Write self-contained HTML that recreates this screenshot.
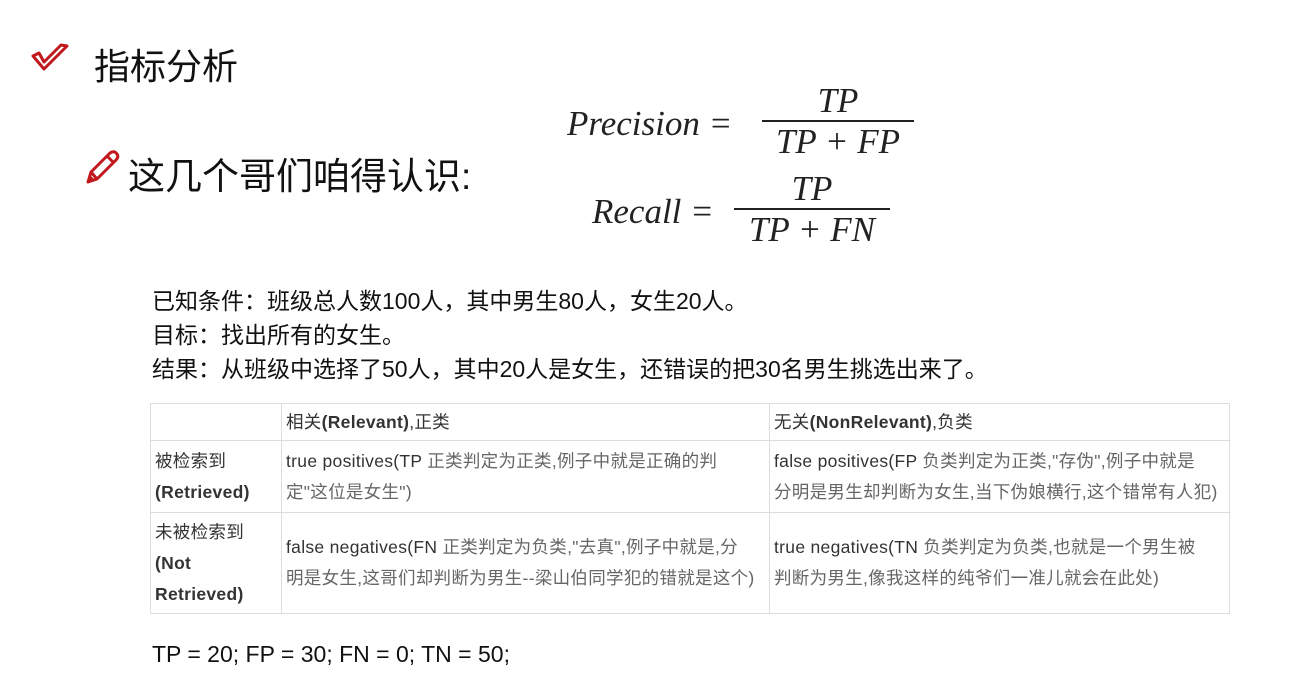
<!DOCTYPE html>
<html><head><meta charset="utf-8"><style>
body{margin:0;width:1297px;height:683px;background:#fff;position:relative;overflow:hidden;font-family:"Liberation Sans","Noto Sans CJK SC",sans-serif;color:#111}
.a{position:absolute;white-space:nowrap}
.m{font-family:"Liberation Serif",serif;font-style:italic;font-size:35px;color:#222}
.frac{position:absolute;text-align:center}
.frac .n{border-bottom:2px solid #222;padding:0 4px 0;line-height:38px}
.frac .d{line-height:40px}
table{position:absolute;left:150px;top:403px;border-collapse:collapse;table-layout:fixed;width:1079px;font-size:17.5px;color:#333;letter-spacing:0.3px}
td{border:1.5px solid #ddd;padding:2px 4px;vertical-align:middle;line-height:31px;white-space:nowrap;overflow:hidden}
.g{color:#666}
</style></head><body>
<svg class="a" style="left:30px;top:42px" width="40" height="32" viewBox="0 0 40 32"><path d="M3 14 L14 27 L37 4 L31 3 L14 20 L9 11 Z" fill="none" stroke="#c0181c" stroke-width="3" stroke-linejoin="round"/></svg>
<div class="a" style="left:94px;top:38px;font-size:36px">指标分析</div>
<svg class="a" style="left:84px;top:148px" width="36" height="38" viewBox="0 0 36 38"><path d="M4 34 L7 24 L26 5 Q30 2 33 6 Q35 9 32 12 L13 31 Z M7 24 L13 31 M23 8 L30 15" fill="none" stroke="#c0181c" stroke-width="3" stroke-linejoin="round"/><path d="M4 34 L7 28 L10 31Z" fill="#c0181c"/></svg>
<div class="a" style="left:128px;top:146px;font-size:37px">这几个哥们咱得认识:</div>
<div class="a m" style="left:567px;top:104px">Precision =</div>
<div class="frac m" style="left:762px;top:82px;width:152px"><div class="n">TP</div><div class="d">TP + FP</div></div>
<div class="a m" style="left:592px;top:192px">Recall =</div>
<div class="frac m" style="left:734px;top:170px;width:156px"><div class="n">TP</div><div class="d">TP + FN</div></div>
<div class="a" style="left:152px;top:282px;font-size:23px">已知条件：班级总人数100人，其中男生80人，女生20人。</div>
<div class="a" style="left:152px;top:316px;font-size:23px">目标：找出所有的女生。</div>
<div class="a" style="left:152px;top:350px;font-size:23px">结果：从班级中选择了50人，其中20人是女生，还错误的把30名男生挑选出来了。</div>
<table>
<colgroup><col style="width:131px"><col style="width:488px"><col style="width:460px"></colgroup>
<tr style="height:37px"><td></td><td>相关<b>(Relevant)</b>,正类</td><td>无关<b>(NonRelevant)</b>,负类</td></tr>
<tr style="height:72px"><td>被检索到<br><b>(Retrieved)</b></td><td>true positives(TP <span class="g">正类判定为正类,例子中就是正确的判<br>定"这位是女生")</span></td><td>false positives(FP <span class="g">负类判定为正类,"存伪",例子中就是<br>分明是男生却判断为女生,当下伪娘横行,这个错常有人犯)</span></td></tr>
<tr style="height:101px"><td>未被检索到<br><b>(Not<br>Retrieved)</b></td><td>false negatives(FN <span class="g">正类判定为负类,"去真",例子中就是,分<br>明是女生,这哥们却判断为男生--梁山伯同学犯的错就是这个)</span></td><td>true negatives(TN <span class="g">负类判定为负类,也就是一个男生被<br>判断为男生,像我这样的纯爷们一准儿就会在此处)</span></td></tr>
</table>
<div class="a" style="left:152px;top:641px;font-size:23px">TP = 20; FP = 30; FN = 0; TN = 50;</div>
</body></html>
